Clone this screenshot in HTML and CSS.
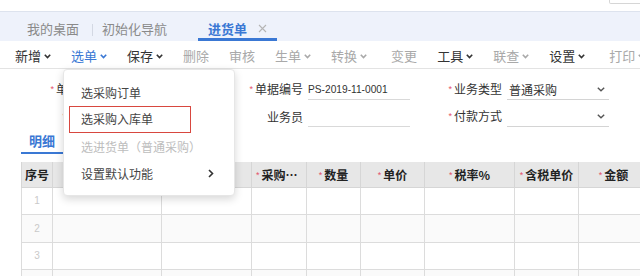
FILE: index.html
```html
<!DOCTYPE html>
<html lang="zh-CN">
<head>
<meta charset="utf-8">
<title>进货单</title>
<link rel="stylesheet" href="styles.css">
</head>
<body>
<div class="page">
  <div class="topstrip"><div class="searchbox"></div></div>

  <div class="tabbar">
    <div class="tab first">我的桌面</div>
    <div class="tab second">初始化导航</div>
    <div class="tab active">进货单<svg class="close" width="9" height="9" viewBox="0 0 9 9"><path d="M1 1L8 8M8 1L1 8" stroke="#b5b5b5" stroke-width="1.1" fill="none"/></svg></div>
  </div>

  <div class="toolbar">
    <div class="tool">新增<svg class="chev" width="7" height="5" viewBox="0 0 7 5"><path d="M0.8 0.8L3.5 3.6L6.2 0.8" fill="none" stroke="currentColor" stroke-width="1.6"/></svg></div>
    <div class="tool blue host">选单<svg class="chev" width="7" height="5" viewBox="0 0 7 5"><path d="M0.8 0.8L3.5 3.6L6.2 0.8" fill="none" stroke="currentColor" stroke-width="1.6"/></svg>
      <div class="dropdown">
        <div class="ditem">选采购订单</div>
        <div class="ditem marked">选采购入库单</div>
        <div class="ditem disabled">选进货单（普通采购）</div>
        <div class="ditem sub">设置默认功能<svg width="6" height="9" viewBox="0 0 6 9"><path d="M1 1L4.5 4.5L1 8" fill="none" stroke="#333" stroke-width="1.6"/></svg></div>
      </div>
    </div>
    <div class="tool">保存<svg class="chev" width="7" height="5" viewBox="0 0 7 5"><path d="M0.8 0.8L3.5 3.6L6.2 0.8" fill="none" stroke="currentColor" stroke-width="1.6"/></svg></div>
    <div class="tool grey">删除</div>
    <span class="sep"></span>
    <div class="tool grey">审核</div>
    <span class="sep"></span>
    <div class="tool grey">生单<svg class="chev" width="7" height="5" viewBox="0 0 7 5"><path d="M0.8 0.8L3.5 3.6L6.2 0.8" fill="none" stroke="currentColor" stroke-width="1.6"/></svg></div>
    <div class="tool grey">转换<svg class="chev" width="7" height="5" viewBox="0 0 7 5"><path d="M0.8 0.8L3.5 3.6L6.2 0.8" fill="none" stroke="currentColor" stroke-width="1.6"/></svg></div>
    <span class="sep wide"></span>
    <div class="tool grey">变更</div>
    <span class="sep"></span>
    <div class="tool">工具<svg class="chev" width="7" height="5" viewBox="0 0 7 5"><path d="M0.8 0.8L3.5 3.6L6.2 0.8" fill="none" stroke="currentColor" stroke-width="1.6"/></svg></div>
    <div class="tool grey">联查<svg class="chev" width="7" height="5" viewBox="0 0 7 5"><path d="M0.8 0.8L3.5 3.6L6.2 0.8" fill="none" stroke="currentColor" stroke-width="1.6"/></svg></div>
    <div class="tool">设置<svg class="chev" width="7" height="5" viewBox="0 0 7 5"><path d="M0.8 0.8L3.5 3.6L6.2 0.8" fill="none" stroke="currentColor" stroke-width="1.6"/></svg></div>
    <span class="sep wide"></span>
    <div class="tool grey">打印<svg class="chev" width="7" height="5" viewBox="0 0 7 5"><path d="M0.8 0.8L3.5 3.6L6.2 0.8" fill="none" stroke="currentColor" stroke-width="1.6"/></svg></div>
  </div>

  <div class="form">
    <div class="field"><label class="lbl"><span class="star">*</span>单据日期</label><div class="input"></div></div>
    <div class="field"><label class="lbl"><span class="star">*</span>单据编号</label><div class="input"><span class="val">PS-2019-11-0001</span></div></div>
    <div class="field"><label class="lbl"><span class="star">*</span>业务类型</label><div class="input select"><span class="cn">普通采购</span><svg width="8" height="5" viewBox="0 0 8 5"><path d="M0.8 0.8L4 3.8L7.2 0.8" fill="none" stroke="#555" stroke-width="1.4"/></svg></div></div>
    <div class="field"><label class="lbl"><span class="star">*</span>供应商</label><div class="input"></div></div>
    <div class="field"><label class="lbl">业务员</label><div class="input"></div></div>
    <div class="field"><label class="lbl"><span class="star">*</span>付款方式</label><div class="input select"><span class="cn"></span><svg width="8" height="5" viewBox="0 0 8 5"><path d="M0.8 0.8L4 3.8L7.2 0.8" fill="none" stroke="#555" stroke-width="1.4"/></svg></div></div>
  </div>

  <div class="dtabs"><div class="dtab">明细</div></div>

  <div class="gridwrap">
    <table class="grid">
      <colgroup>
        <col class="c1"><col class="c2"><col class="c3"><col class="c4"><col class="c5"><col class="c6"><col class="c7"><col class="c8"><col class="c9"><col class="c10">
      </colgroup>
      <thead>
        <tr>
          <th class="first">序号</th>
          <th><span class="star">*</span>商品编号</th>
          <th>商品名称</th>
          <th><span class="star">*</span>采购单位</th>
          <th><span class="star">*</span>数量</th>
          <th><span class="star">*</span>单价</th>
          <th><span class="star">*</span>税率%</th>
          <th><span class="star">*</span>含税单价</th>
          <th><span class="star">*</span>金额</th>
          <th>税额</th>
        </tr>
      </thead>
      <tbody>
        <tr><td class="no">1</td><td></td><td></td><td></td><td></td><td></td><td></td><td></td><td></td><td></td></tr>
        <tr class="alt"><td class="no">2</td><td></td><td></td><td></td><td></td><td></td><td></td><td></td><td></td><td></td></tr>
        <tr><td class="no">3</td><td></td><td></td><td></td><td></td><td></td><td></td><td></td><td></td><td></td></tr>
        <tr class="alt"><td class="no">4</td><td></td><td></td><td></td><td></td><td></td><td></td><td></td><td></td><td></td></tr>
      </tbody>
    </table>
  </div>
</div>
</body>
</html>
```

FILE: styles.css
```css
* { box-sizing: border-box; }
html, body { margin: 0; padding: 0; background: #fff; }
body {
  font-family: "Noto Sans CJK SC", "Noto Sans", sans-serif;
  font-size: 13px;
  color: #333;
}
.page { width: 640px; height: 276px; overflow: hidden; position: relative; }

.topstrip {
  height: 12px;
  display: flex;
  justify-content: flex-end;
  border-bottom: 1px solid #dde3ee;
  background: #fff;
}
.searchbox {
  width: 40px;
  height: 4px;
  margin-right: -9px;
  border: 1px solid #d6d6d6;
  border-top: none;
  border-radius: 0 0 2px 2px;
}

.tabbar {
  height: 29px;
  background: #eef2fb;
  display: flex;
  align-items: stretch;
}
.tab {
  padding-top: 7px;
  line-height: 19px;
  border-bottom: 3px solid transparent;
  color: #8a8a8a;
  font-size: 13px;
  white-space: nowrap;
  display: flex;
  align-items: flex-start;
}
.tab.first { margin-left: 13px; padding-left: 14px; padding-right: 14px; position: relative; }
.tab.first::after {
  content: "";
  position: absolute;
  right: 0; top: 12px;
  width: 1px; height: 12px;
  background: #d3d8e3;
}
.tab.second { padding-left: 9px; padding-right: 9px; }
.tab.active {
  margin-left: 22px;
  padding-left: 10px;
  padding-right: 10px;
  color: #3a78d4;
  font-weight: bold;
  border-bottom-color: #3a78d4;
}
.close { margin-left: 11px; margin-top: 5px; }

.toolbar {
  height: 28px;
  padding-left: 5px;
  border-bottom: 1px solid #e3e3e3;
  display: flex;
  align-items: center;
  background: #fff;
}
.tool {
  padding: 2px 10px 0 10px;
  line-height: 25px;
  font-size: 13px;
  color: #333;
  display: flex;
  align-items: center;
  white-space: nowrap;
}
.tool .chev { margin-left: 3px; margin-top: 1px; }
.tool.blue { color: #3a78d4; }
.tool.grey { color: #a9a9a9; }
.sep { width: 1px; height: 12px; background: #dcdcdc; margin-top: 2px; }
.sep.wide { margin-left: 3px; margin-right: 1px; }
.host { position: relative; }

.dropdown {
  position: absolute;
  left: 2px;
  top: 28px;
  width: 172px;
  height: 127px;
  background: #fff;
  border: 1px solid #e6e6e6;
  border-radius: 4px;
  box-shadow: 0 3px 8px rgba(0, 0, 0, 0.16);
  padding-top: 9px;
  z-index: 10;
}
.ditem {
  height: 27px;
  line-height: 27px;
  padding-left: 17px;
  padding-right: 20px;
  font-size: 12px;
  color: #444;
  white-space: nowrap;
}
.ditem.marked {
  margin-left: 5px;
  width: 122px;
  padding-left: 11px;
  line-height: 24px;
  border: 1.5px solid #d8473f;
}
.ditem.disabled { color: #bdbdbd; }
.ditem.sub {
  display: flex;
  justify-content: space-between;
  align-items: center;
}

.form {
  padding: 7px 0 0 44px;
  display: grid;
  grid-template-columns: repeat(3, 199px);
  grid-auto-rows: 27px;
}
.field { display: flex; align-items: center; }
.lbl {
  width: 60px;
  text-align: right;
  font-size: 12px;
  color: #333;
  white-space: nowrap;
  line-height: 18px;
}
.star {
  color: #e4506a;
  font-family: "Liberation Sans", sans-serif;
  font-size: 9px;
  margin-right: 2px;
  position: relative;
  top: -2px;
  font-weight: normal;
}
.input {
  margin-left: 5px;
  width: 102px;
  height: 20px;
  border-bottom: 1px solid #d9d9d9;
  display: flex;
  align-items: center;
}
.val {
  font-family: "Liberation Sans", Arial, sans-serif;
  font-size: 10.2px;
  color: #333;
  padding-top: 1px;
}
.input.select {
  justify-content: space-between;
  padding: 0 4px 0 2px;
  height: 21px;
  border-bottom-color: #d4d4d4;
}
.cn { font-size: 12px; color: #333; }

.dtabs {
  margin: 0 0 8px 21px;
  display: flex;
}
.dtab {
  padding: 0 8px;
  line-height: 22px;
  border-bottom: 2px solid #3a78d4;
  color: #3a78d4;
  font-weight: bold;
  font-size: 13px;
}

.gridwrap { margin-left: 21px; }
.grid {
  table-layout: fixed;
  border-collapse: collapse;
  width: 727px;
}
.c1 { width: 31px; }
.c2 { width: 109px; }
.c3 { width: 90px; }
.c4 { width: 55px; }
.c5 { width: 54px; }
.c6 { width: 64px; }
.c7 { width: 90px; }
.c8 { width: 64px; }
.c9 { width: 70px; }
.c10 { width: 100px; }
.grid th {
  height: 25px;
  background: #e7e7e7;
  border: 1px solid #d6d6d6;
  border-top: none;
  font-size: 12px;
  font-weight: bold;
  color: #222;
  padding: 0 4px;
  white-space: nowrap;
  overflow: hidden;
  text-overflow: ellipsis;
  text-align: center;
}
.grid th.first { padding: 0; text-overflow: clip; }
.grid td {
  height: 27.6px;
  border: 1px solid #dcdcdc;
  padding: 0;
}
.grid tr.alt td { background: #fafafa; }
.grid td.no {
  text-align: center;
  font-family: "Liberation Sans", Arial, sans-serif;
  font-size: 10px;
  color: #c9c9c9;
}
```
